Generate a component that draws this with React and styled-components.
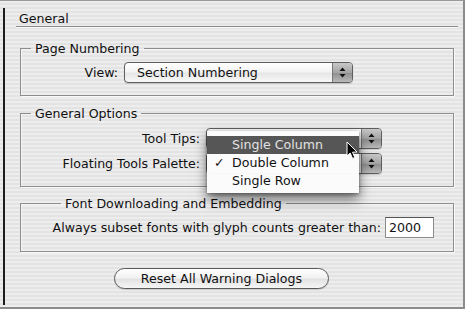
import styled, { createGlobalStyle } from "styled-components";

const Global = createGlobalStyle`
  html, body { margin: 0; padding: 0; background: #e8e8e8; }
  body { font-family: "DejaVu Sans", "Liberation Sans", sans-serif; font-size: 12.6px; color: #111; }
`;

const Window = styled.div`
  width: 465px;
  height: 309px;
  box-sizing: border-box;
  border-top: 1px solid #9a9a9a;
  border-right: 2px solid #8c8c8c;
  border-bottom: 2px solid #8c8c8c;
  background: repeating-linear-gradient(to bottom, #ededed 0 2px, #e3e3e3 2px 4px);
  overflow: hidden;
`;

const Pane = styled.div`
  margin: 7px 0 0 3px;
  height: 297px;
  border-left: 2px solid #1c1c1c;
  padding-top: 3px;
  box-sizing: border-box;
`;

const Title = styled.div`
  margin-left: 11px;
  padding-left: 3px;
  width: 439px;
  line-height: 15px;
  border-bottom: 1px solid #8a8a8a;
  box-shadow: 0 1px 0 #fafafa;
`;

const Group = styled.fieldset`
  margin: ${(p) => p.$top}px 0 0 15px;
  width: 434px;
  box-sizing: border-box;
  border: 1px solid #8e8e8e;
  box-shadow: 1px 1px 0 #f8f8f8, inset 1px 1px 0 #f4f4f4;
  padding: ${(p) => p.$pad};
  min-width: 0;
`;

const Legend = styled.legend`
  margin-left: 10px;
  padding: 0 4px;
  line-height: 15px;
`;

const Row = styled.div`
  display: grid;
  grid-template-columns: ${(p) => p.$label}px auto;
  column-gap: ${(p) => p.$gap ?? 6}px;
  align-items: center;
  justify-content: start;
  & + & { margin-top: 4px; }
`;

const Label = styled.span`
  text-align: right;
  white-space: nowrap;
`;

const PopupWrap = styled.div`
  position: relative;
`;

const Popup = styled.div`
  width: ${(p) => p.$w}px;
  height: 21px;
  box-sizing: border-box;
  border: 1px solid #5e5e5e;
  border-radius: 4px;
  display: flex;
  overflow: hidden;
  background: linear-gradient(to bottom, #ffffff 0%, #f4f4f4 45%, #e6e6e6 55%, #f8f8f8 100%);
  box-shadow: 0 1px 1px rgba(0, 0, 0, 0.15);
`;

const PopupText = styled.span`
  flex: 1;
  padding-left: 12px;
  line-height: 19px;
  white-space: nowrap;
`;

const Stepper = styled.span`
  width: 19px;
  border-left: 1px solid #777;
  background: linear-gradient(to bottom, #c8c8c8 0%, #a4a4a4 50%, #8e8e8e 52%, #b8b8b8 100%);
  display: flex;
  align-items: center;
  justify-content: center;
`;

const Menu = styled.div`
  position: absolute;
  left: 1px;
  top: 3px;
  width: 152px;
  padding: 5px 0 3px;
  background: rgba(251, 251, 251, 0.98);
  box-shadow: 0 6px 12px rgba(0, 0, 0, 0.55), 0 1px 3px rgba(0, 0, 0, 0.4);
  z-index: 5;
`;

const Item = styled.div`
  display: flex;
  height: 18px;
  line-height: 18px;
  padding-left: 7px;
  background: ${(p) => (p.$active ? "#565656" : "transparent")};
  color: ${(p) => (p.$active ? "#e2e2e2" : "#111")};
`;

const Check = styled.span`
  width: 18px;
`;

const Cursor = styled.svg`
  position: absolute;
  left: 139px;
  top: 10px;
  z-index: 6;
`;

const Field = styled.div`
  width: 49px;
  height: 21px;
  box-sizing: border-box;
  border: 1px solid #8a8a8a;
  border-top-color: #555;
  background: #fff;
  padding-left: 3px;
  line-height: 19px;
`;

const Button = styled.div`
  margin: 16px 0 0 109px;
  width: 215px;
  height: 21px;
  box-sizing: border-box;
  border: 1px solid #5a5a5a;
  border-radius: 11px;
  text-align: center;
  line-height: 19px;
  background: linear-gradient(to bottom, #ffffff 0%, #f2f2f2 45%, #e2e2e2 55%, #f6f6f6 100%);
  box-shadow: 0 1px 1px rgba(0, 0, 0, 0.15);
`;

function Arrows() {
  return (
    <svg width="7" height="11" viewBox="0 0 7 11">
      <path d="M3.5 0.5 L6.5 4 L0.5 4 Z" fill="#111" />
      <path d="M0.5 7 L6.5 7 L3.5 10.5 Z" fill="#111" />
    </svg>
  );
}

function Select({ width, value, children }) {
  return (
    <PopupWrap>
      <Popup $w={width}>
        <PopupText>{value}</PopupText>
        <Stepper>
          <Arrows />
        </Stepper>
      </Popup>
      {children}
    </PopupWrap>
  );
}

export default function App() {
  return (
    <>
      <Global />
      <Window>
        <Pane>
          <Title>General</Title>

          <Group $top={14} $pad="6px 0 12px">
            <Legend>Page Numbering</Legend>
            <Row $label={97}>
              <Label>View:</Label>
              <Select width={229} value="Section Numbering" />
            </Row>
          </Group>

          <Group $top={10} $pad="7px 0 12px">
            <Legend>General Options</Legend>
            <Row $label={179}>
              <Label>Tool Tips:</Label>
              <Select width={176} value="">
                <Menu>
                  <Item $active>
                    <Check />
                    Single Column
                  </Item>
                  <Item>
                    <Check>✓</Check>
                    Double Column
                  </Item>
                  <Item>
                    <Check />
                    Single Row
                  </Item>
                  <Cursor width="12" height="19" viewBox="0 0 12 19">
                    <path
                      d="M1 1 L1 15 L4.2 12 L6.6 17.5 L8.8 16.5 L6.5 11.2 L11 11 Z"
                      fill="#000"
                      stroke="#fff"
                      strokeWidth="1"
                      strokeLinejoin="round"
                    />
                  </Cursor>
                </Menu>
              </Select>
            </Row>
            <Row $label={179}>
              <Label>Floating Tools Palette:</Label>
              {/* its value lies under the open menu */}
              <Select width={176} value="" />
            </Row>
          </Group>

          <Group $top={9} $pad="6px 0 13px 30px">
            <Legend>Font Downloading and Embedding</Legend>
            <Row $label={330} $gap={4}>
              <Label>Always subset fonts with glyph counts greater than:</Label>
              <Field>2000</Field>
            </Row>
          </Group>

          <Button>Reset All Warning Dialogs</Button>
        </Pane>
      </Window>
    </>
  );
}
